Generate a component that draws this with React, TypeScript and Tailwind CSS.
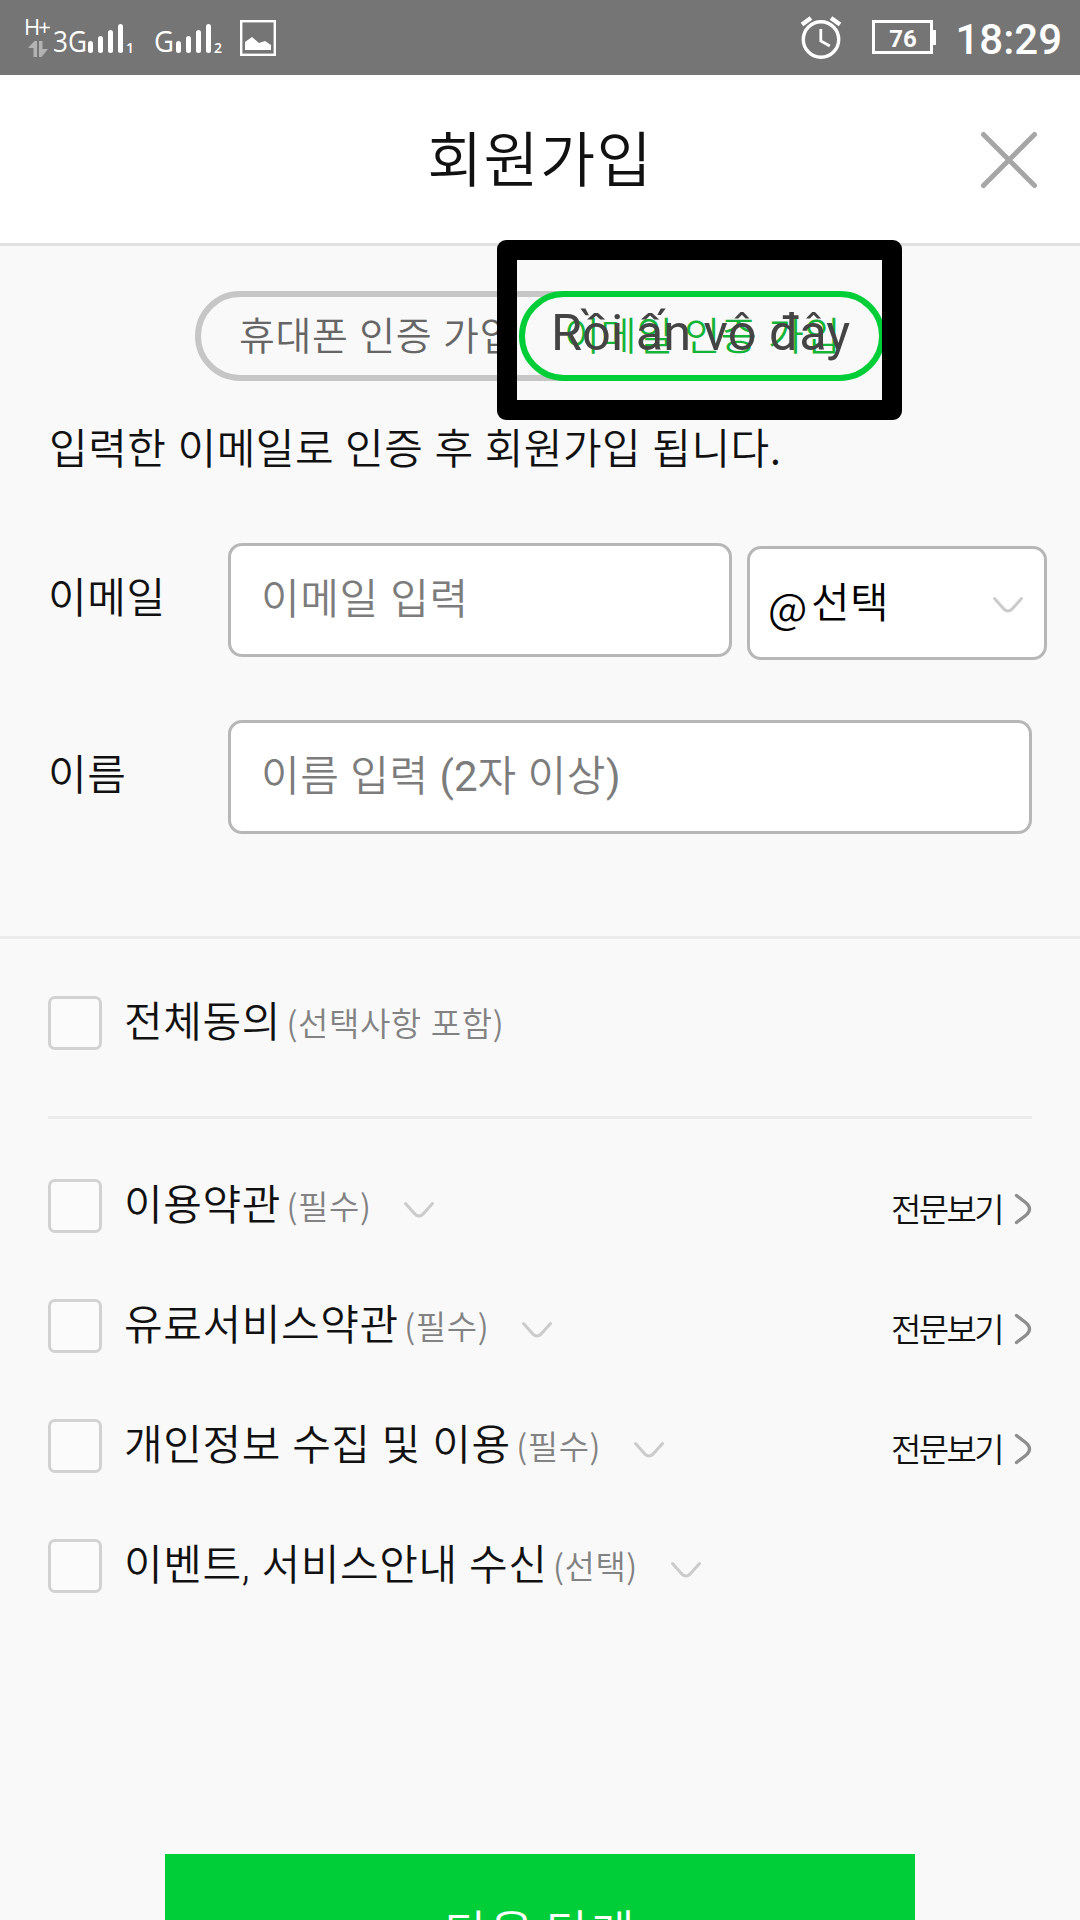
import React from "react";

const KR = "font-['Noto_Sans_CJK_KR',sans-serif]";

function SignalIcon({ label, sub, wide }: { label: string; sub: string; wide?: boolean }) {
  const start = wide ? 35 : 22;
  return (
    <svg className={wide ? "w-[83px] h-[48px] shrink-0" : "w-[70px] h-[48px] shrink-0"} viewBox={wide ? "0 0 83 48" : "0 0 70 48"} fill="#fff">
      <text x="0" y="34" fontSize="29" fontFamily="Open Sans, sans-serif" fontWeight="400" textLength={wide ? 34 : 20} lengthAdjust="spacingAndGlyphs">
        {label}
      </text>
      <rect x={start} y="23" width="5" height="12" rx="2.5" />
      <rect x={start + 10} y="18" width="5" height="17" rx="2.5" />
      <rect x={start + 20} y="12" width="5" height="23" rx="2.5" />
      <rect x={start + 30} y="6" width="5" height="29" rx="2.5" />
      <text x={start + 38} y="35" fontSize="14" fontFamily="Open Sans, sans-serif" fontWeight="600">
        {sub}
      </text>
    </svg>
  );
}

function StatusBar() {
  return (
    <div className="flex h-[75px] items-start justify-between bg-[#757575] pl-[24px] pr-[18px] text-white">
      <div className="flex items-start pt-[18px]">
        <div className="flex w-[28px] flex-col">
          <span className="h-[20px] whitespace-nowrap font-['Open_Sans',sans-serif] text-[22px] font-normal leading-[17px] tracking-[-2px]">H+</span>
          <svg className="ml-[4px] mt-[2px] h-[17px] w-[20px]" viewBox="0 0 20 17" fill="#b2b2b2">
            <path d="M0 8 6.500 1H9V17H5.500V8ZM11 1h3.500v8H20L13.500 17H11Z" />
          </svg>
        </div>
        <div className="ml-[1px]"><SignalIcon label="3G" sub="1" wide /></div>
        <div className="ml-[18px]"><SignalIcon label="G" sub="2" /></div>
        <svg className="ml-[16px] mt-[2px] h-[36px] w-[36px]" viewBox="0 0 36 36">
          <rect x="1.2" y="1.2" width="33.6" height="33.6" fill="none" stroke="#fff" strokeWidth="2.4" />
          <path d="M5 30v-8l7-5 7 6 6-2 6 4v5z" fill="#fff" />
        </svg>
      </div>
      <div className="flex items-start">
        <svg className="mt-[15px] h-[46px] w-[44px]" viewBox="0 0 44 46" fill="none" stroke="#fff">
          <circle cx="22" cy="24.500" r="17.700" strokeWidth="3.400" />
          <path d="M3 9.500 12 3M41 9.500 32 3" strokeWidth="4.500" />
          <path d="M21.800 14v12l9 5" strokeWidth="2.800" />
        </svg>
        <div className="ml-[29px] mt-[20px] flex items-center">
          <div className="flex h-[34px] w-[61px] items-center justify-center border-[3px] border-white pt-[3px] font-['Roboto',sans-serif] text-[24px] font-bold leading-none">76</div>
          <div className="h-[15px] w-[3px] bg-white" />
        </div>
        <span className="ml-[19px] mt-[16px] font-['Roboto',sans-serif] text-[42px] font-medium leading-[48px]">18:29</span>
      </div>
    </div>
  );
}

function Down({ className = "" }: { className?: string }) {
  return (
    <svg className={"h-[18px] w-[32px] shrink-0 " + className} viewBox="0 0 32 18" fill="none" stroke="#cbcbcb" strokeWidth="3" strokeLinecap="round">
      <path d="M2.500 2.500 10.500 11.500Q16 18.500 21.500 11.500L29.500 2.500" />
    </svg>
  );
}

function AgreeRow({ label, note, expand, more }: { label: React.ReactNode; note: string; expand?: boolean; more?: boolean }) {
  return (
    <div className="flex h-[54px] items-center">
      <span className="h-[54px] w-[54px] shrink-0 rounded-[7px] border-[3px] border-[#d2d2d2] bg-[#fbfbfb]" />
      <span className="ml-[22px] -mt-[9px] whitespace-nowrap text-[42px] leading-[54px] tracking-[0.6px] text-[#111] [word-spacing:1.2px]">{label}</span>
      <span className="ml-[5.500px] -mt-[2px] whitespace-nowrap text-[33px] leading-[54px] tracking-[0.6px] text-[#828282] [word-spacing:1px]">{note}</span>
      {expand && <Down className="ml-[32px] mt-[7px]" />}
      {more && (
        <span className="ml-auto flex items-center">
          <span className="mt-[3px] whitespace-nowrap text-[33px] leading-[54px] tracking-[-2.6px] text-[#111]">전문보기</span>
          <svg className="ml-[12px] mt-[5px] h-[34px] w-[18px]" viewBox="0 0 18 34" fill="none" stroke="#8e8e8e" strokeWidth="3.400" strokeLinecap="round">
            <path d="M2.500 3.500 11 10Q20 17 11 24L2.500 30.500" />
          </svg>
        </span>
      )}
    </div>
  );
}

export default function App() {
  return (
    <div className={"h-[1920px] w-[1080px] overflow-hidden bg-[#f9f9f9] font-[350] " + KR}>
      <StatusBar />
      <header className="relative flex h-[171px] items-center justify-center border-b-[3px] border-[#e1e1e1] bg-white">
        <h1 className="-mt-[6px] text-[60px] leading-[80px] tracking-[1.2px] text-[#111]">회원가입</h1>
        <svg className="absolute right-[40px] top-[54px] h-[62px] w-[62px]" viewBox="0 0 62 62" stroke="#a6a6a6" strokeWidth="5" strokeLinecap="round">
          <path d="M5.500 5.500 56.500 56.500M56.500 5.500 5.500 56.500" />
        </svg>
      </header>

      <section className="h-[693px] border-b-[3px] border-[#ebebeb] pt-[45px]">
        <div className="relative flex h-[90px] justify-center text-[39px] leading-[73px] tracking-[0.6px] [word-spacing:1.5px]">
          <div className="w-[420px] whitespace-nowrap rounded-full border-[6px] border-[#c6c6c6] pl-[38px] text-[#666]">휴대폰 인증 가입</div>
          <div className="relative -ml-[96px] w-[366px] whitespace-nowrap rounded-full border-[6px] border-[#00ce38] bg-[#f9f9f9] pl-[39px] text-[#14b438]">이메일 인증 가입</div>
          <div className="absolute left-[497px] top-[-51px] h-[180px] w-[405px] rounded-[9px] border-[20px] border-black pl-[34px] pt-[41px] font-['Roboto',sans-serif] text-[50.500px] font-normal leading-[64px] tracking-normal text-[#444] [word-spacing:0px]">
            <span className="whitespace-nowrap">Rồi ấn vô đây</span>
          </div>
        </div>
        <p className="ml-[49px] mt-[35px] whitespace-nowrap text-[42px] leading-[60px] tracking-[0.500px] text-[#111] [word-spacing:1.2px]">입력한 이메일로 인증 후 회원가입 됩니다.</p>
        <div className="mt-[67px] flex pl-[48px] tracking-[0.6px] [word-spacing:1.5px]">
          <span className="w-[180px] text-[42px] leading-[104px] text-[#111]">이메일</span>
          <div className="h-[114px] w-[504px] rounded-[14px] border-[3px] border-[#b7b7b7] bg-white pl-[30px] text-[42px] leading-[100px] text-[#7c7c7c]">이메일 입력</div>
          <div className="ml-[15px] mt-[3px] flex h-[114px] w-[300px] rounded-[14px] border-[3px] border-[#b7b7b7] bg-white pl-[18px] text-[42px] leading-[101px] text-black">
            <span className="mt-[6px]">@</span>
            <span className="ml-[3px]">선택</span>
            <Down className="ml-auto mr-[20px] mt-[47px]" />
          </div>
        </div>
        <div className="mt-[60px] flex pl-[48px] tracking-[0.6px] [word-spacing:1.5px]">
          <span className="w-[180px] text-[42px] leading-[104px] text-[#111]">이름</span>
          <div className="h-[114px] w-[804px] rounded-[14px] border-[3px] border-[#b7b7b7] bg-white pl-[30px] text-[42px] leading-[100px] text-[#7c7c7c] [word-spacing:0.8px]">
            이름 입력 <span className="font-['Roboto',sans-serif] font-normal leading-none tracking-normal">(2</span>자 이상<span className="font-['Roboto',sans-serif] font-normal leading-none tracking-normal">)</span>
          </div>
        </div>
      </section>

      <section className="px-[48px] pt-[57px]">
        <AgreeRow label="전체동의" note="(선택사항 포함)" />
        <div className="mb-[60px] mt-[66px] h-[3px] bg-[#ebebeb]" />
        <div className="flex flex-col gap-[66px]">
          <AgreeRow label="이용약관" note="(필수)" expand more />
          <AgreeRow label="유료서비스약관" note="(필수)" expand more />
          <AgreeRow label="개인정보 수집 및 이용" note="(필수)" expand more />
          <AgreeRow
            label={<>이벤트<span className="font-['Roboto',sans-serif] leading-none">,</span> 서비스안내 수신</>}
            note="(선택)"
            expand
          />
        </div>
      </section>

      <button className="mx-auto mt-[261px] block h-[150px] w-[750px] bg-[#00ce38] text-[48px] leading-[144px] tracking-[0.7px] text-white">다음 단계</button>
    </div>
  );
}
